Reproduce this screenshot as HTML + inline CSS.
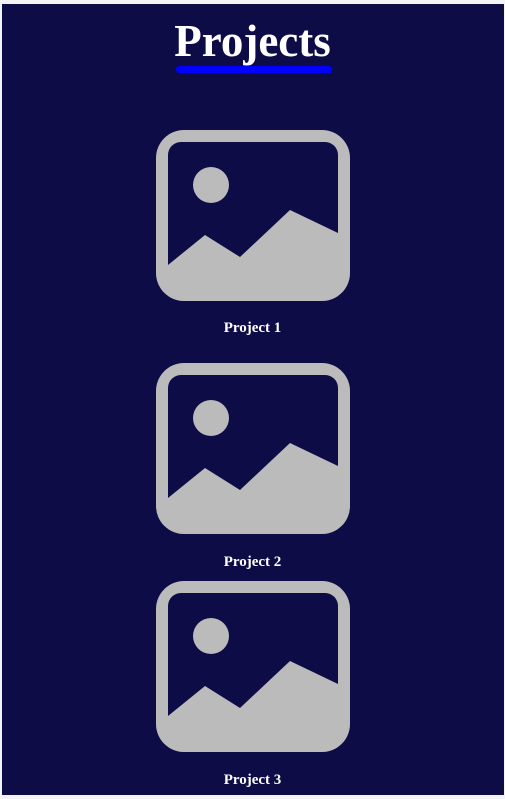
<!DOCTYPE html>
<html><head><style>
html,body{margin:0;padding:0;background:#f2f4f5;width:505px;height:799px;overflow:hidden}
.panel{position:absolute;left:2px;top:4px;width:502px;height:791px;background:#0d0c46}
h1{position:absolute;left:0;width:505px;top:13px;margin:0;text-align:center;font:bold 45px "Liberation Serif",serif;color:#fff;line-height:56px}
.bar{position:absolute;left:176px;top:66px;width:156px;height:7px;background:#0000ff;border-radius:3px}
svg{position:absolute;left:156px;width:194px;height:171px}
.lbl{position:absolute;left:0;width:505px;text-align:center;font:bold 15px "Liberation Serif",serif;color:#fff}
</style></head><body>
<div class="panel"></div>
<h1>Projects</h1>
<div class="bar"></div>
<svg style="top:130px" viewBox="0 0 194 171"><defs><clipPath id="c"><rect x="0" y="0" width="194" height="171" rx="28"/></clipPath></defs>
<g clip-path="url(#c)"><rect width="194" height="171" fill="#bbb"/><rect x="12" y="12" width="170" height="160" rx="13" fill="#0d0c46"/><polygon points="12,135 49,105 84,127 134,80 182,103 182,180 12,180" fill="#bbb"/><circle cx="55" cy="55" r="18" fill="#bbb"/></g></svg>
<div class="lbl" style="top:320px">Project 1</div>
<svg style="top:363px" viewBox="0 0 194 171"><g clip-path="url(#c)"><rect width="194" height="171" fill="#bbb"/><rect x="12" y="12" width="170" height="160" rx="13" fill="#0d0c46"/><polygon points="12,135 49,105 84,127 134,80 182,103 182,180 12,180" fill="#bbb"/><circle cx="55" cy="55" r="18" fill="#bbb"/></g></svg>
<div class="lbl" style="top:554px">Project 2</div>
<svg style="top:581px" viewBox="0 0 194 171"><g clip-path="url(#c)"><rect width="194" height="171" fill="#bbb"/><rect x="12" y="12" width="170" height="160" rx="13" fill="#0d0c46"/><polygon points="12,135 49,105 84,127 134,80 182,103 182,180 12,180" fill="#bbb"/><circle cx="55" cy="55" r="18" fill="#bbb"/></g></svg>
<div class="lbl" style="top:772px">Project 3</div>
</body></html>
